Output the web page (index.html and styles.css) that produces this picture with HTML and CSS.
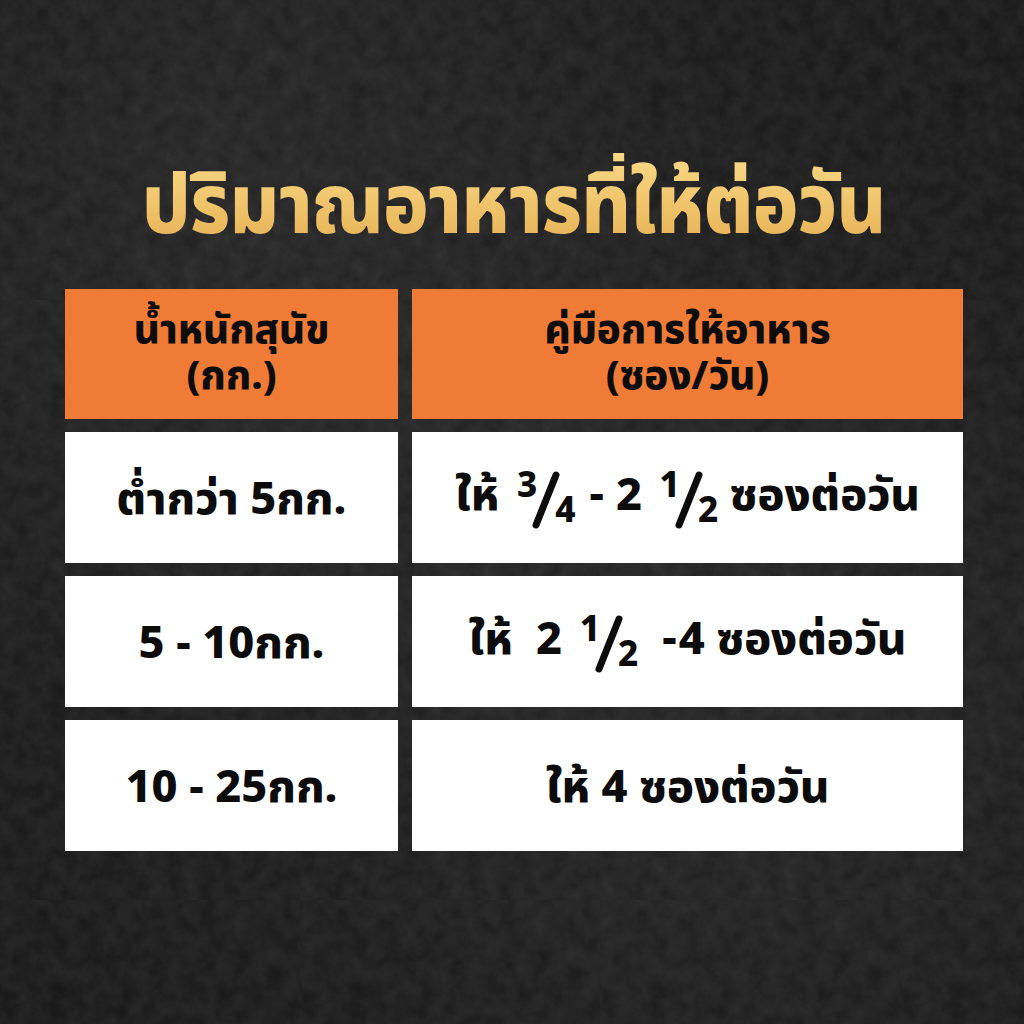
FILE: index.html
```html
<!DOCTYPE html>
<html lang="th">
<head>
<meta charset="utf-8">
<link rel="stylesheet" href="styles.css">
</head>
<body>
<div class="page">
  <h1 class="title">ปริมาณอาหารที่ให้ต่อวัน</h1>
  <div class="table">
    <div class="cell head"><span class="hl">น้ำหนักสุนัข</span><span class="hl">(กก.)</span></div>
    <div class="cell head"><span class="hl">คู่มือการให้อาหาร</span><span class="hl">(ซอง/วัน)</span></div>
    <div class="cell">ต่ำกว่า 5กก.</div>
    <div class="cell"><span class="line">ให้ <span class="num">3</span><svg class="sl" viewBox="0 0 30 60"><line x1="5" y1="55" x2="25" y2="5"/></svg><span class="den">4</span><span class="dash">-</span>2 <span class="num">1</span><svg class="sl" viewBox="0 0 30 60"><line x1="5" y1="55" x2="25" y2="5"/></svg><span class="den">2</span> ซองต่อวัน</span></div>
    <div class="cell">5 - 10กก.</div>
    <div class="cell"><span class="line">ให้&nbsp; 2 <span class="num">1</span><svg class="sl" viewBox="0 0 30 60"><line x1="5" y1="55" x2="25" y2="5"/></svg><span class="den">2</span><span class="dash2">-</span>4 ซองต่อวัน</span></div>
    <div class="cell">10 - 25กก.</div>
    <div class="cell">ให้ 4 ซองต่อวัน</div>
  </div>
</div>
</body>
</html>
```

FILE: styles.css
```css
html, body {
  margin: 0;
  padding: 0;
}
body {
  width: 1024px;
  height: 1024px;
  overflow: hidden;
  background-color: #1c1c1c;
  background-image:
    url("data:image/svg+xml;utf8,<svg xmlns='http://www.w3.org/2000/svg' width='300' height='300'><filter id='n'><feTurbulence type='fractalNoise' baseFrequency='0.06' numOctaves='4' seed='3'/><feColorMatrix values='0 0 0 0 1  0 0 0 0 1  0 0 0 0 1  0 0 0 0.09 0'/></filter><rect width='300' height='300' filter='url(%23n)'/></svg>"),
    radial-gradient(ellipse at 20% 15%, rgba(255,255,255,0.04), transparent 45%),
    radial-gradient(ellipse at 80% 75%, rgba(255,255,255,0.03), transparent 45%),
    radial-gradient(ellipse at 50% 50%, #1f1f1f 0%, #151515 100%);
  font-family: "Noto Sans Thai", "Noto Sans", "DejaVu Sans", sans-serif;
}
.page {
  display: flex;
  flex-direction: column;
  align-items: center;
  padding-left: 4px;
}
.title {
  margin: 153px 0 0 0;
  height: 136px;
  font-size: 84px;
  font-weight: 800;
  line-height: 110px;
  letter-spacing: -1px;
  transform: scaleX(0.91);
  background: linear-gradient(180deg, #f8d987 0%, #edbd62 50%, #d49a44 100%);
  -webkit-background-clip: text;
  background-clip: text;
  color: transparent;
}
.table {
  display: grid;
  grid-template-columns: 333px 551px;
  grid-template-rows: 130px 131px 131px 131px;
  gap: 13px 14px;
}
.cell {
  background: #ffffff;
  color: #0c0c0c;
  display: flex;
  align-items: center;
  justify-content: center;
  text-align: center;
  font-size: 45px;
  font-weight: 800;
  line-height: 50px;
  padding-top: 4px;
  box-sizing: border-box;
}
.head {
  background: #ef7b36;
  flex-direction: column;
  font-size: 40px;
  padding-top: 0;
}
.hl {
  display: block;
  line-height: 46px;
}
.num {
  font-size: 0.78em;
  line-height: 1;
  vertical-align: 0.36em;
  margin-left: 6px;
}
.den {
  font-size: 0.78em;
  line-height: 1;
  vertical-align: -0.34em;
}
.sl {
  width: 30px;
  height: 60px;
  vertical-align: -0.46em;
  margin: 0 -6px;
}
.sl line {
  stroke: #0c0c0c;
  stroke-width: 7;
  stroke-linecap: round;
}
.dash {
  margin: 0 12px 0 14px;
}
.dash2 {
  margin: 0 2px 0 24px;
}
```
